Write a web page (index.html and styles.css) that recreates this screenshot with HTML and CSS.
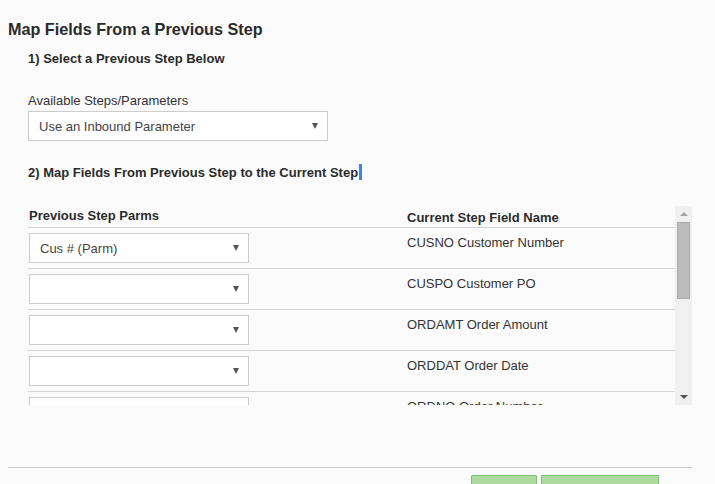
FILE: index.html
```html
<!DOCTYPE html>
<html>
<head>
    <title>Map Fields From a Previous Step</title>
    <link rel="stylesheet" href="styles.css">
</head>
<body>

<div class="page">
    <h1>Map Fields From a Previous Step</h1>

    <div class="section">
        <h2 class="step-one">1) Select a Previous Step Below</h2>

        <label class="field-label">Available Steps/Parameters</label>
        <div class="select wide">
            <span>Use an Inbound Parameter</span>
            <span class="caret"></span>
        </div>

        <h2 class="step-two">2) Map Fields From Previous Step to the Current Step<span class="cursor"></span></h2>

        <div class="map-box">
            <div class="map-scroll">
                <div class="map-row head">
                    <div class="cell-left">Previous Step Parms</div>
                    <div class="cell-right">Current Step Field Name</div>
                </div>
                <div class="map-row">
                    <div class="cell-left"><div class="select"><span>Cus # (Parm)</span><span class="caret"></span></div></div>
                    <div class="cell-right">CUSNO Customer Number</div>
                </div>
                <div class="map-row">
                    <div class="cell-left"><div class="select"><span></span><span class="caret"></span></div></div>
                    <div class="cell-right">CUSPO Customer PO</div>
                </div>
                <div class="map-row">
                    <div class="cell-left"><div class="select"><span></span><span class="caret"></span></div></div>
                    <div class="cell-right">ORDAMT Order Amount</div>
                </div>
                <div class="map-row">
                    <div class="cell-left"><div class="select"><span></span><span class="caret"></span></div></div>
                    <div class="cell-right">ORDDAT Order Date</div>
                </div>
                <div class="map-row">
                    <div class="cell-left"><div class="select"><span></span><span class="caret"></span></div></div>
                    <div class="cell-right">ORDNO Order Number</div>
                </div>
            </div>
            <div class="scrollbar">
                <span class="arrow-up"></span>
                <div class="thumb"></div>
                <span class="arrow-down"></span>
            </div>
        </div>
    </div>

    <div class="footer">
        <button class="btn btn-small"></button>
        <button class="btn btn-large"></button>
    </div>
</div>

</body>
</html>
```

FILE: styles.css
```css
html, body {
    height: 100%;
}

body {
    font-family: "Liberation Sans", Arial, sans-serif;
    background-color: #fbfbfb;
    margin: 0;
    padding: 0;
    color: #333;
    font-size: 13px;
    overflow: hidden;
}

.page {
    height: 100%;
    overflow: hidden;
    padding: 0 23px 0 8px;
}

h1 {
    font-size: 16.2px;
    line-height: 20px;
    margin: 19px 0 0 0;
    color: #2b2b2b;
}

.section {
    padding-left: 20px;
}

h2 {
    font-size: 13px;
    line-height: 18px;
    margin: 0;
    color: #2b2b2b;
}

.step-one {
    margin-top: 11px;
}

.step-two {
    margin-top: 23px;
}

.cursor {
    display: inline-block;
    width: 3px;
    height: 16px;
    background-color: #3a86e8;
    vertical-align: -3px;
    margin-left: 1px;
}

.field-label {
    display: block;
    line-height: 18px;
    margin-top: 24px;
}

.select {
    box-sizing: border-box;
    height: 30px;
    width: 220px;
    border: 1px solid #ccc;
    background-color: #fff;
    padding: 0 10px;
    display: flex;
    align-items: center;
    justify-content: space-between;
    color: #444;
}

.select.wide {
    width: 300px;
    margin-top: 1px;
}

.caret {
    width: 0;
    height: 0;
    border-left: 3px solid transparent;
    border-right: 3px solid transparent;
    border-top: 6px solid #555;
    margin-right: -1px;
}

.map-box {
    margin-top: 24px;
    height: 199px;
    display: flex;
}

.map-scroll {
    flex: 1;
    overflow: hidden;
}

.map-row {
    display: grid;
    grid-template-columns: 379px 1fr;
    border-bottom: 1px solid #d4d4d4;
    padding: 5px 0;
    height: 30px;
}

.map-row.head {
    height: 16px;
    padding: 2px 0 3px 0;
    font-weight: bold;
    line-height: 16px;
    color: #2b2b2b;
}

.cell-left {
    padding-left: 1px;
}

.cell-right {
    line-height: 18px;
    padding-top: 1px;
}

.scrollbar {
    width: 17px;
    background-color: #f0f0f0;
    display: flex;
    flex-direction: column;
    align-items: center;
}

.arrow-up {
    margin-top: 6px;
    width: 0;
    height: 0;
    border-left: 4px solid transparent;
    border-right: 4px solid transparent;
    border-bottom: 4px solid #a3a3a3;
}

.thumb {
    box-sizing: border-box;
    margin-top: 6px;
    width: 13px;
    height: 77px;
    background-color: #bcbcbc;
    border: 1px solid #a9a9a9;
}

.arrow-down {
    margin-top: auto;
    margin-bottom: 6px;
    width: 0;
    height: 0;
    border-left: 4px solid transparent;
    border-right: 4px solid transparent;
    border-top: 4px solid #505050;
}

.footer {
    margin-top: 62px;
    border-top: 1px solid #c8c8c8;
    display: flex;
    justify-content: flex-end;
    gap: 4px;
    padding: 7px 33px 0 0;
}

.btn {
    background-color: #addb9f;
    border: 1px solid #7cc56b;
    height: 34px;
    padding: 0;
    border-radius: 1px;
}

.btn-small {
    width: 66px;
}

.btn-large {
    width: 118px;
}
```
